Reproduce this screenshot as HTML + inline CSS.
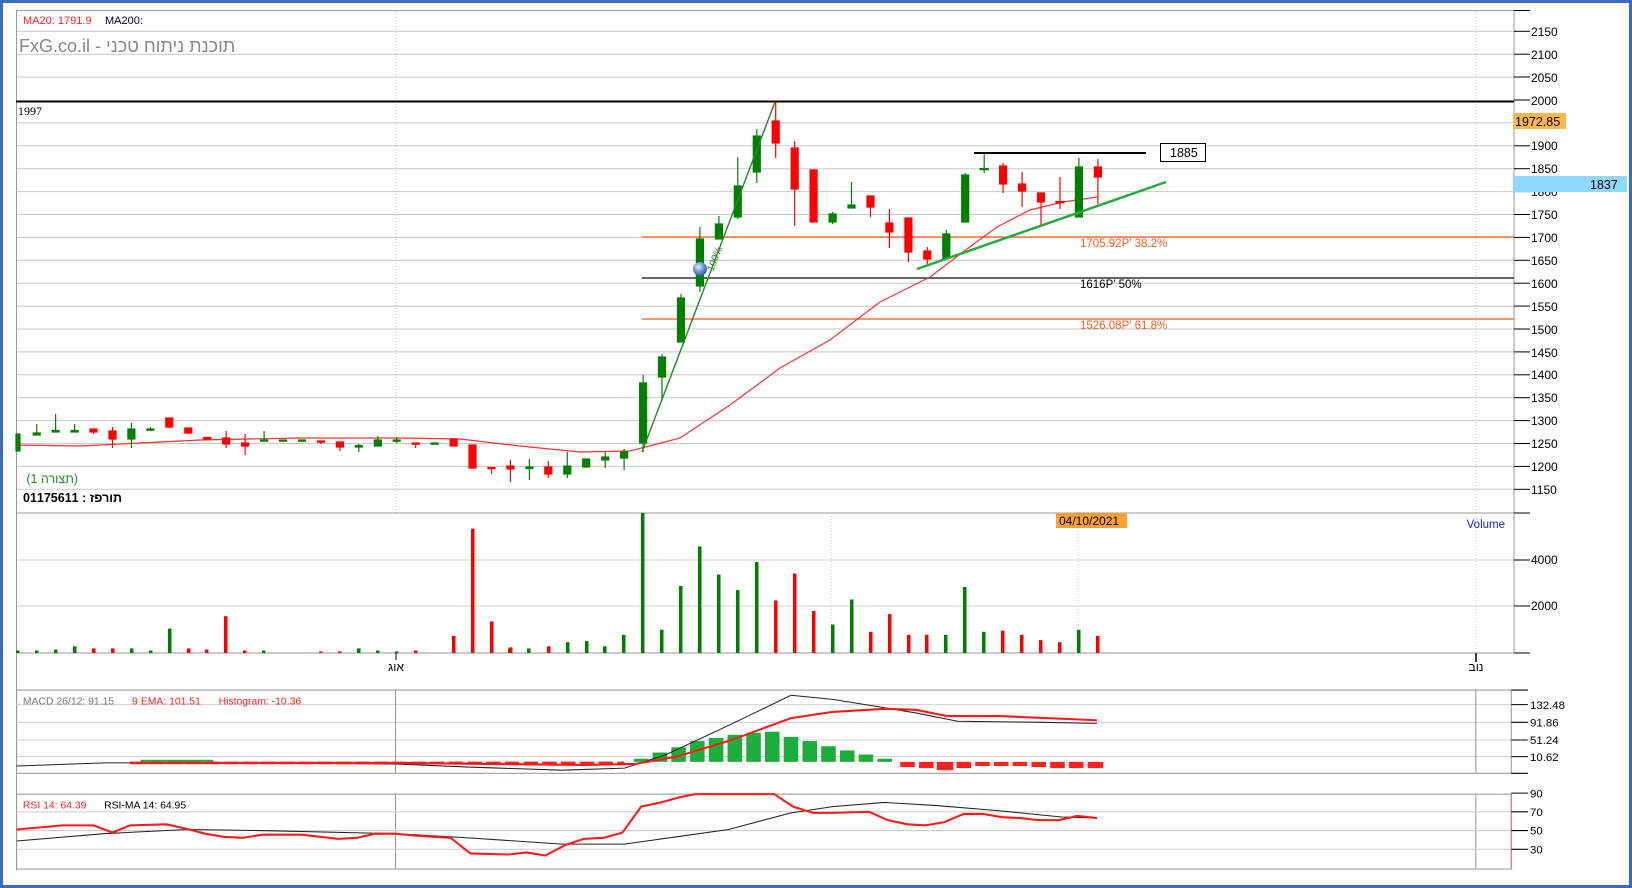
<!DOCTYPE html>
<html><head><meta charset="utf-8"><style>
html,body{margin:0;padding:0;background:#fff;}
svg{display:block;font-family:"Liberation Sans","Noto Sans CJK JP",sans-serif;}
</style></head><body>
<svg width="1632" height="888" viewBox="0 0 1632 888" xmlns="http://www.w3.org/2000/svg">
<rect x="0" y="0" width="1632" height="888" fill="#fff"/>
<rect x="1.5" y="1.5" width="1629" height="885" fill="none" stroke="#3a6cc0" stroke-width="3"/>

<!-- MAIN PANE (1632 coords) -->
<g stroke="#c8c8c8" stroke-width="1">
<line x1="17" y1="54.2" x2="1514" y2="54.2"/>
<line x1="17" y1="31.3" x2="1514" y2="31.3"/>
<line x1="17" y1="77" x2="1514" y2="77"/>
<line x1="17" y1="122.9" x2="1514" y2="122.9"/>
<line x1="17" y1="145.8" x2="1514" y2="145.8"/>
<line x1="17" y1="168.7" x2="1514" y2="168.7"/>
<line x1="17" y1="191.6" x2="1514" y2="191.6"/>
<line x1="17" y1="214.5" x2="1514" y2="214.5"/>
<line x1="17" y1="237.4" x2="1514" y2="237.4"/>
<line x1="17" y1="260.3" x2="1514" y2="260.3"/>
<line x1="17" y1="283.2" x2="1514" y2="283.2"/>
<line x1="17" y1="306.1" x2="1514" y2="306.1"/>
<line x1="17" y1="329" x2="1514" y2="329"/>
<line x1="17" y1="351.9" x2="1514" y2="351.9"/>
<line x1="17" y1="374.8" x2="1514" y2="374.8"/>
<line x1="17" y1="397.7" x2="1514" y2="397.7"/>
<line x1="17" y1="420.6" x2="1514" y2="420.6"/>
<line x1="17" y1="443.5" x2="1514" y2="443.5"/>
<line x1="17" y1="466.4" x2="1514" y2="466.4"/>
<line x1="17" y1="489.3" x2="1514" y2="489.3"/>
</g>
<g stroke="#c0c0c0" stroke-dasharray="1,2">
<line x1="396" y1="11" x2="396" y2="513"/>
<line x1="1476" y1="11" x2="1476" y2="513"/>
</g>
<line x1="17" y1="10.5" x2="1514" y2="10.5" stroke="#999"/>
<line x1="16.5" y1="10" x2="16.5" y2="870" stroke="#999"/>
<line x1="1514" y1="10" x2="1514" y2="653" stroke="#999"/>
<line x1="17" y1="513" x2="1514" y2="513" stroke="#999"/>
<line x1="17" y1="653" x2="1514" y2="653" stroke="#999"/>
<!-- axis ticks and labels -->
<g stroke="#000">
<line x1="1514" y1="10.5" x2="1530" y2="10.5"/>
<line x1="1514" y1="31.3" x2="1530" y2="31.3"/><line x1="1514" y1="54.2" x2="1530" y2="54.2"/><line x1="1514" y1="77" x2="1530" y2="77"/><line x1="1514" y1="100" x2="1530" y2="100"/><line x1="1514" y1="122.9" x2="1530" y2="122.9"/><line x1="1514" y1="145.8" x2="1530" y2="145.8"/><line x1="1514" y1="168.7" x2="1530" y2="168.7"/><line x1="1514" y1="191.6" x2="1530" y2="191.6"/><line x1="1514" y1="214.5" x2="1530" y2="214.5"/><line x1="1514" y1="237.4" x2="1530" y2="237.4"/><line x1="1514" y1="260.3" x2="1530" y2="260.3"/><line x1="1514" y1="283.2" x2="1530" y2="283.2"/><line x1="1514" y1="306.1" x2="1530" y2="306.1"/><line x1="1514" y1="329" x2="1530" y2="329"/><line x1="1514" y1="351.9" x2="1530" y2="351.9"/><line x1="1514" y1="374.8" x2="1530" y2="374.8"/><line x1="1514" y1="397.7" x2="1530" y2="397.7"/><line x1="1514" y1="420.6" x2="1530" y2="420.6"/><line x1="1514" y1="443.5" x2="1530" y2="443.5"/><line x1="1514" y1="466.4" x2="1530" y2="466.4"/><line x1="1514" y1="489.3" x2="1530" y2="489.3"/><line x1="1514" y1="513" x2="1530" y2="513"/>
</g>
<g font-size="12" fill="#000">
<text x="1531" y="36">2150</text><text x="1531" y="59">2100</text><text x="1531" y="82">2050</text><text x="1531" y="105">2000</text><text x="1531" y="128">1950</text><text x="1531" y="150">1900</text><text x="1531" y="173">1850</text><text x="1531" y="196">1800</text><text x="1531" y="219">1750</text><text x="1531" y="242">1700</text><text x="1531" y="265">1650</text><text x="1531" y="288">1600</text><text x="1531" y="311">1550</text><text x="1531" y="334">1500</text><text x="1531" y="357">1450</text><text x="1531" y="379">1400</text><text x="1531" y="402">1350</text><text x="1531" y="425">1300</text><text x="1531" y="448">1250</text><text x="1531" y="471">1200</text><text x="1531" y="494">1150</text>
</g>
<rect x="1513" y="113" width="53" height="16" fill="#ffb550"/>
<text x="1515" y="126" font-size="12.5" fill="#000">1972.85</text>
<rect x="1513" y="176" width="114" height="16" fill="#8fd8ff"/>
<text x="1590" y="189" font-size="12.5" fill="#000">1837</text>

<text x="23" y="24" font-size="11" fill="#ff2020">MA20: 1791.9</text>
<text x="105" y="24" font-size="11" fill="#000050">MA200:</text>
<text x="19" y="52" font-size="18" fill="#888">FxG.co.il - תוכנת ניתוח טכני</text>

<line x1="16" y1="101.5" x2="1514" y2="101.5" stroke="#000" stroke-width="2"/>
<text x="18" y="115" font-size="12" font-family="Liberation Serif,serif" fill="#000">1997</text>

<!-- fib -->
<line x1="642" y1="237" x2="1514" y2="237" stroke="#ff5a1e" stroke-width="1.3"/>
<line x1="642" y1="278" x2="1514" y2="278" stroke="#333" stroke-width="1.6"/>
<line x1="642" y1="319" x2="1514" y2="319" stroke="#ff5a1e" stroke-width="1.3"/>
<text x="1080" y="247" font-size="11.5" fill="#ff5a1e">1705.92P'  38.2%</text>
<text x="1080" y="288" font-size="11.5" fill="#000">1616P'  50%</text>
<text x="1080" y="329" font-size="11.5" fill="#ff5a1e">1526.08P'  61.8%</text>

<line x1="974" y1="153" x2="1146" y2="153" stroke="#000" stroke-width="2"/>
<rect x="1160.5" y="143.5" width="45" height="18" fill="#fff" stroke="#000"/>
<text x="1170" y="157" font-size="12.5" fill="#000">1885</text>

<!-- MA20 -->
<polyline fill="none" stroke="#ff3030" stroke-width="1.2" points="17,445 80,446 200,440 300,438 400,438 460,439 520,446 580,452 630,451 680,438 730,405 780,368 830,340 880,302 930,277 963,252 997,227 1030,210 1063,202 1097,197"/>

<!-- candles -->
<g stroke-width="1.2">
<g stroke="#008000" fill="#008000">
<rect x="16" y="434" width="4" height="17"/>
<line x1="36.7" y1="424" x2="36.7" y2="434"/><rect x="33.2" y="433" width="7" height="2"/>
<line x1="55.6" y1="414" x2="55.6" y2="431"/><rect x="52.1" y="430.5" width="7" height="1.5"/>
<line x1="74.6" y1="424" x2="74.6" y2="431"/><rect x="71.1" y="430.5" width="7" height="1.5"/>
<line x1="131.4" y1="423" x2="131.4" y2="448"/><rect x="127.9" y="429" width="7" height="10"/>
<line x1="150.4" y1="427" x2="150.4" y2="431"/><rect x="146.9" y="429" width="7" height="1.2"/>
<line x1="264.1" y1="431" x2="264.1" y2="440"/><rect x="260.6" y="440" width="7" height="1.2"/>
<rect x="279.5" y="440" width="7" height="1.2"/><rect x="298.5" y="440" width="7" height="1.2"/>
<line x1="358.8" y1="444" x2="358.8" y2="452"/><rect x="355.3" y="445.5" width="7" height="1.5"/>
<line x1="377.8" y1="436" x2="377.8" y2="446"/><rect x="374.3" y="440" width="7" height="6"/>
<line x1="396.7" y1="437" x2="396.7" y2="443"/><rect x="393.2" y="440" width="7" height="1.2"/>
<rect x="431.1" y="443" width="7" height="1.2"/>
<line x1="529.4" y1="459" x2="529.4" y2="480"/><rect x="525.9" y="467" width="7" height="1.5"/>
<line x1="567.3" y1="452" x2="567.3" y2="478"/><rect x="563.8" y="466" width="7" height="8"/>
<line x1="586.2" y1="459" x2="586.2" y2="468"/><rect x="582.7" y="459" width="7" height="8"/>
<line x1="605.2" y1="452" x2="605.2" y2="468"/><rect x="601.7" y="457" width="7" height="3"/>
<line x1="624.1" y1="449" x2="624.1" y2="470"/><rect x="620.6" y="452" width="7" height="6"/>
<line x1="643.1" y1="375" x2="643.1" y2="452"/><rect x="639.6" y="383" width="7" height="60"/>
<line x1="662" y1="354" x2="662" y2="400"/><rect x="658.5" y="357" width="7" height="20"/>
<line x1="681" y1="294" x2="681" y2="342"/><rect x="677.5" y="298" width="7" height="44"/>
<line x1="699.9" y1="227" x2="699.9" y2="292"/><rect x="696.4" y="239" width="7" height="47"/>
<line x1="718.9" y1="216" x2="718.9" y2="239"/><rect x="715.4" y="224" width="7" height="15"/>
<line x1="737.8" y1="157" x2="737.8" y2="219"/><rect x="734.3" y="186" width="7" height="31"/>
<line x1="756.8" y1="129" x2="756.8" y2="183"/><rect x="753.3" y="136" width="7" height="36"/>
<line x1="832.6" y1="212" x2="832.6" y2="224"/><rect x="829.1" y="214" width="7" height="8"/>
<line x1="851.5" y1="182" x2="851.5" y2="208"/><rect x="848" y="205" width="7" height="3"/>
<line x1="946.3" y1="230" x2="946.3" y2="258"/><rect x="942.8" y="234" width="7" height="24"/>
<line x1="965.2" y1="173" x2="965.2" y2="222"/><rect x="961.7" y="175" width="7" height="47"/>
<line x1="984.2" y1="153" x2="984.2" y2="173"/><rect x="980.2" y="168.5" width="8" height="1.2"/>
<line x1="1078.9" y1="158" x2="1078.9" y2="217"/><rect x="1075.4" y="167" width="7" height="50"/>
</g>
<g stroke="#ff0000" fill="#ff0000">
<line x1="93.5" y1="429" x2="93.5" y2="434"/><rect x="90" y="429" width="7" height="3"/>
<line x1="112.5" y1="427" x2="112.5" y2="448"/><rect x="109" y="431" width="7" height="8"/>
<line x1="169.3" y1="418" x2="169.3" y2="428"/><rect x="165.8" y="418" width="7" height="9"/>
<line x1="188.3" y1="428" x2="188.3" y2="434"/><rect x="184.8" y="428" width="7" height="5"/>
<line x1="207.2" y1="437" x2="207.2" y2="440"/><rect x="203.7" y="437.5" width="7" height="1.5"/>
<line x1="226.2" y1="431" x2="226.2" y2="448"/><rect x="222.7" y="438" width="7" height="6"/>
<line x1="245.1" y1="434" x2="245.1" y2="455"/><rect x="241.6" y="443" width="7" height="3"/>
<line x1="320.9" y1="441" x2="320.9" y2="444"/><rect x="317.4" y="441" width="7" height="1.2"/>
<line x1="339.9" y1="442" x2="339.9" y2="451"/><rect x="336.4" y="442" width="7" height="5"/>
<line x1="415.7" y1="443" x2="415.7" y2="448"/><rect x="412.2" y="443" width="7" height="1.2"/>
<rect x="450.1" y="439" width="7" height="7"/>
<rect x="469" y="445" width="7" height="23"/>
<line x1="491.5" y1="468" x2="491.5" y2="474"/><rect x="488" y="467.5" width="7" height="1.2"/>
<line x1="510.4" y1="460" x2="510.4" y2="482"/><rect x="506.9" y="466" width="7" height="3"/>
<line x1="548.3" y1="461" x2="548.3" y2="478"/><rect x="544.8" y="467" width="7" height="7"/>
<line x1="775.7" y1="102" x2="775.7" y2="158"/><rect x="772.2" y="121" width="7" height="22"/>
<line x1="794.7" y1="141" x2="794.7" y2="226"/><rect x="791.2" y="148" width="7" height="41"/>
<rect x="810.1" y="170" width="7" height="52"/>
<line x1="870.5" y1="196" x2="870.5" y2="217"/><rect x="867" y="196" width="7" height="11"/>
<line x1="889.4" y1="209" x2="889.4" y2="248"/><rect x="885.9" y="223" width="7" height="9"/>
<line x1="908.4" y1="218" x2="908.4" y2="262"/><rect x="904.9" y="218" width="7" height="34"/>
<line x1="927.3" y1="247" x2="927.3" y2="265"/><rect x="923.8" y="251" width="7" height="8"/>
<line x1="1003.1" y1="163" x2="1003.1" y2="193"/><rect x="999.6" y="166" width="7" height="18"/>
<line x1="1022.1" y1="172" x2="1022.1" y2="207"/><rect x="1018.6" y="184" width="7" height="7"/>
<line x1="1041" y1="193" x2="1041" y2="225"/><rect x="1037.5" y="193" width="7" height="9"/>
<line x1="1060" y1="177" x2="1060" y2="209"/><rect x="1056" y="201.5" width="8" height="1.2"/>
<line x1="1097.9" y1="159" x2="1097.9" y2="204"/><rect x="1094.4" y="167" width="7" height="10"/>
</g>
</g>

<!-- trendlines -->
<line x1="642" y1="452" x2="775" y2="102" stroke="#1e8a1e" stroke-width="1.4"/>
<text x="0" y="0" font-size="10" fill="#1e8a1e" transform="translate(713,272) rotate(-68)">100%</text>
<line x1="917" y1="269" x2="1166" y2="182" stroke="#2aa840" stroke-width="2.5"/>
<defs><radialGradient id="sp" cx="0.4" cy="0.35" r="0.7"><stop offset="0" stop-color="#e8f2ff"/><stop offset="0.5" stop-color="#6a9ad8"/><stop offset="1" stop-color="#2a4e90"/></radialGradient></defs>
<circle cx="700" cy="269" r="7" fill="url(#sp)"/>

<text x="78" y="483" font-size="12.5" fill="#1e8a1e" direction="rtl">(תצורה 1)</text>
<text x="23" y="502" font-size="12.5" fill="#000" font-weight="bold">01175611 : תורפז</text>

<!-- VOLUME PANE -->
<g stroke="#d0d0d0"><line x1="17" y1="560" x2="1514" y2="560"/><line x1="17" y1="606" x2="1514" y2="606"/></g>
<g stroke="#c8c8c8" stroke-dasharray="1,2"><line x1="831" y1="513" x2="831" y2="653"/><line x1="1078" y1="513" x2="1078" y2="653"/><line x1="1476" y1="513" x2="1476" y2="653"/></g>
<g stroke="#000"><line x1="1514" y1="560" x2="1530" y2="560"/><line x1="1514" y1="606" x2="1530" y2="606"/><line x1="1514" y1="653" x2="1530" y2="653"/><line x1="396" y1="653" x2="396" y2="660"/><line x1="1476" y1="653" x2="1476" y2="662" stroke-width="1.5"/></g>
<text x="1531" y="564" font-size="12">4000</text>
<text x="1531" y="610" font-size="12">2000</text>
<text x="1505" y="528" font-size="11.5" fill="#2020e0" text-anchor="end">Volume</text>
<rect x="1056" y="513" width="71" height="15" fill="#ffa030"/>
<text x="1059" y="525" font-size="12" fill="#000">04/10/2021</text>
<text x="396" y="671" font-size="12" text-anchor="middle">אוג</text>
<text x="1476" y="671" font-size="12" text-anchor="middle">נוב</text>
<g>
<g fill="#008000">
<rect x="16" y="650.5" width="3.5" height="2.5"/><rect x="35" y="650.5" width="3.5" height="2.5"/><rect x="54" y="649.5" width="3.5" height="3.5"/><rect x="73" y="646.3" width="3.5" height="6.7"/><rect x="130" y="648.4" width="3.5" height="4.6"/><rect x="149" y="650.5" width="3.5" height="2.5"/><rect x="168" y="628.6" width="3.5" height="24.4"/><rect x="262" y="650.5" width="3.5" height="2.5"/><rect x="357" y="648.4" width="3.5" height="4.6"/><rect x="376" y="650.5" width="3.5" height="2.5"/><rect x="395" y="651.5" width="3.5" height="1.5"/><rect x="508" y="648.4" width="3.5" height="4.6"/><rect x="527" y="648.4" width="3.5" height="4.6"/><rect x="566" y="642.2" width="3.5" height="10.8"/><rect x="585" y="641.1" width="3.5" height="11.9"/><rect x="603" y="646.3" width="3.5" height="6.7"/><rect x="622" y="634.9" width="3.5" height="18.1"/><rect x="641" y="513" width="3.5" height="140"/><rect x="660" y="629.7" width="3.5" height="23.3"/><rect x="679" y="586" width="3.5" height="67"/><rect x="698" y="546.4" width="3.5" height="106.6"/><rect x="717" y="574.5" width="3.5" height="78.5"/><rect x="736" y="590.1" width="3.5" height="62.9"/><rect x="755" y="562" width="3.5" height="91"/><rect x="831" y="624.5" width="3.5" height="28.5"/><rect x="850" y="599.5" width="3.5" height="53.5"/><rect x="944" y="634.9" width="3.5" height="18.1"/><rect x="963" y="587" width="3.5" height="66"/><rect x="982" y="631.8" width="3.5" height="21.2"/><rect x="1077" y="629.7" width="3.5" height="23.3"/>
</g>
<g fill="#ff0000">
<rect x="92" y="648.4" width="3.5" height="4.6"/><rect x="111" y="648.4" width="3.5" height="4.6"/><rect x="187" y="648.4" width="3.5" height="4.6"/><rect x="205" y="649.5" width="3.5" height="3.5"/><rect x="224" y="616.2" width="3.5" height="36.8"/><rect x="243" y="650.5" width="3.5" height="2.5"/><rect x="319" y="651.5" width="3.5" height="1.5"/><rect x="338" y="651.5" width="3.5" height="1.5"/><rect x="414" y="650.5" width="3.5" height="2.5"/><rect x="452" y="635.9" width="3.5" height="17.1"/><rect x="471" y="528.7" width="3.5" height="124.3"/><rect x="490" y="621.4" width="3.5" height="31.6"/><rect x="509" y="647.4" width="3.5" height="5.6"/><rect x="547" y="646.3" width="3.5" height="6.7"/><rect x="774" y="600.5" width="3.5" height="52.5"/><rect x="793" y="573.5" width="3.5" height="79.5"/><rect x="812" y="611" width="3.5" height="42"/><rect x="869" y="631.8" width="3.5" height="21.2"/><rect x="888" y="614.1" width="3.5" height="38.9"/><rect x="907" y="634.9" width="3.5" height="18.1"/><rect x="925" y="634.9" width="3.5" height="18.1"/><rect x="1001" y="630.7" width="3.5" height="22.3"/><rect x="1020" y="634.9" width="3.5" height="18.1"/><rect x="1039" y="640.1" width="3.5" height="12.9"/><rect x="1058" y="642.2" width="3.5" height="10.8"/><rect x="1096" y="635.9" width="3.5" height="17.1"/>
</g>
</g>

<!-- LOWER PANES (display coords, scaled) -->
<g transform="scale(1.0408)">
<!-- MACD -->
<rect x="16" y="663" width="1436" height="80" fill="none" stroke="#999"/>
<g stroke="#d0d0d0"><line x1="16" y1="677" x2="1452" y2="677"/><line x1="16" y1="694" x2="1452" y2="694"/><line x1="16" y1="711" x2="1452" y2="711"/><line x1="16" y1="727" x2="1452" y2="727"/></g>
<g stroke="#999"><line x1="380" y1="663" x2="380" y2="743"/><line x1="1418" y1="663" x2="1418" y2="743"/><line x1="380" y1="763" x2="380" y2="835"/><line x1="1418" y1="763" x2="1418" y2="835"/></g>
<g stroke="#000"><line x1="1452" y1="663" x2="1468" y2="663"/><line x1="1452" y1="677" x2="1468" y2="677"/><line x1="1452" y1="694" x2="1468" y2="694"/><line x1="1452" y1="711" x2="1468" y2="711"/><line x1="1452" y1="727" x2="1468" y2="727"/><line x1="1452" y1="743" x2="1468" y2="743"/></g>
<g font-size="11" fill="#000"><text x="1470" y="681">132.48</text><text x="1470" y="698">91.86</text><text x="1470" y="715">51.24</text><text x="1470" y="731">10.62</text></g>
<text x="22" y="677" font-size="10" fill="#777">MACD 26/12: 91.15</text>
<text x="127" y="677" font-size="10" fill="#ff2020">9 EMA: 101.51</text>
<text x="210" y="677" font-size="10" fill="#ff2020">Histogram: -10.36</text>
<g fill="#1cae3c">
<rect x="135" y="730" width="70" height="2"/>
<rect x="609" y="729" width="14" height="3"/><rect x="627" y="723" width="14" height="9"/><rect x="645" y="718" width="14" height="14"/><rect x="663" y="712" width="14" height="20"/><rect x="681" y="709" width="14" height="23"/><rect x="699" y="706" width="14" height="26"/><rect x="717" y="704" width="14" height="28"/><rect x="735" y="703" width="14" height="29"/><rect x="753" y="708" width="14" height="24"/><rect x="771" y="712" width="14" height="20"/><rect x="789" y="717" width="14" height="15"/><rect x="807" y="721" width="14" height="11"/><rect x="825" y="725" width="14" height="7"/><rect x="843" y="729" width="14" height="3"/>
</g>
<line x1="125" y1="733" x2="600" y2="733" stroke="#ff2020" stroke-width="2.5" stroke-dasharray="14,4"/>
<g fill="#ff2020"><rect x="865" y="732" width="14" height="5"/><rect x="883" y="732" width="14" height="6"/><rect x="900" y="732" width="16" height="8"/><rect x="919" y="732" width="14" height="6"/><rect x="937" y="732" width="14" height="4"/><rect x="955" y="732" width="14" height="4"/><rect x="973" y="732" width="14" height="4"/><rect x="991" y="732" width="14" height="5"/><rect x="1009" y="732" width="14" height="6"/><rect x="1027" y="732" width="14" height="6"/><rect x="1045" y="732" width="15" height="6"/></g>
<polyline fill="none" stroke="#222" stroke-width="1" points="16,736 100,733 200,733 380,734 450,737 540,740 600,738 640,725 700,697 760,668 800,672 850,680 880,685 920,693 1000,694 1054,695"/>
<polyline fill="none" stroke="#ff1a1a" stroke-width="2" points="125,733 380,733 560,735 610,734 650,727 700,712 760,690 800,684 850,681 880,682 910,688 960,688 1054,692"/>

<!-- RSI -->
<rect x="16" y="763" width="1436" height="72" fill="none" stroke="#999"/>
<line x1="1452" y1="763" x2="1452" y2="835" stroke="#e07070"/>
<g stroke="#d0d0d0"><line x1="16" y1="780" x2="1452" y2="780"/><line x1="16" y1="798" x2="1452" y2="798"/><line x1="16" y1="816" x2="1452" y2="816"/></g>
<g stroke="#000"><line x1="1452" y1="762" x2="1468" y2="762"/><line x1="1452" y1="780" x2="1468" y2="780"/><line x1="1452" y1="798" x2="1468" y2="798"/><line x1="1452" y1="816" x2="1468" y2="816"/></g>
<g font-size="11" fill="#000"><text x="1470" y="766">90</text><text x="1470" y="784">70</text><text x="1470" y="802">50</text><text x="1470" y="820">30</text></g>
<text x="22" y="777" font-size="10" fill="#ff2020">RSI 14: 64.39</text>
<text x="100" y="777" font-size="10" fill="#000">RSI-MA 14: 64.95</text>
<polyline fill="none" stroke="#222" stroke-width="1" points="16,808 100,801 180,797 250,798 380,801 450,805 540,811 600,811 650,804 700,797 760,781 800,775 850,771 900,774 960,779 1020,785 1054,786"/>
<polyline fill="none" stroke="#ff1a1a" stroke-width="2" points="16,797 60,793 90,793 108,800 125,793 160,792 178,796 197,801 215,804 233,805 252,802 290,802 325,806 343,805 360,801 380,801 400,803 433,805 452,820 488,821 506,819 524,822 543,812 561,806 580,805 598,800 616,775 635,771 653,766 668,763 744,763 762,775 781,781 799,781 835,780 853,788 872,792 889,793 907,790 926,782 944,782 962,785 980,786 998,788 1017,788 1035,784 1054,786"/>
</g>
</svg>
</body></html>
